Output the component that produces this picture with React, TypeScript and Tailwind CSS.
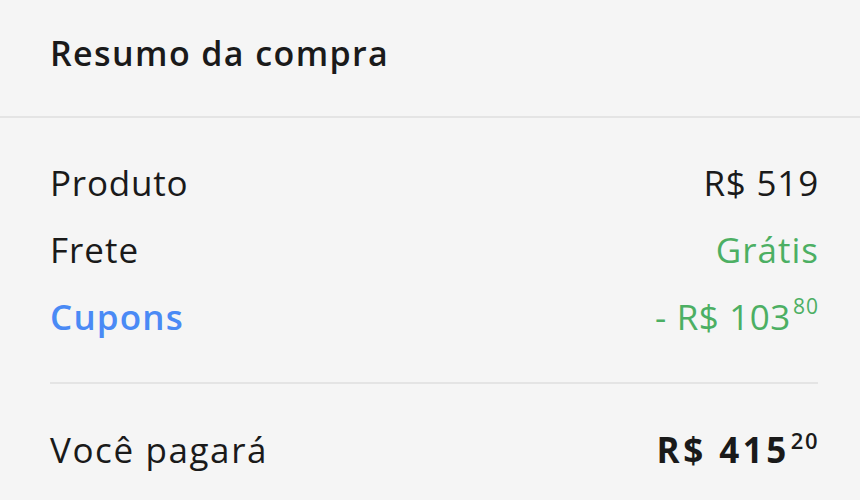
import React from "react";

export default function App() {
  return (
    <div
      className="w-full h-[500px] bg-[#f5f5f5] text-[#1a1a1a] overflow-hidden"
      style={{ fontFamily: '"Open Sans", "Liberation Sans", sans-serif' }}
    >
      <div className="h-[116px] flex items-center pl-[50px] pr-[42px] pb-[10px]">
        <h2 className="text-[34px] leading-none font-semibold tracking-[1.4px]">Resumo da compra</h2>
      </div>
      <div className="h-[2px] bg-[#e4e4e4]" />
      <div className="pl-[50px] pr-[42px] pt-[31px]">
        <div className="h-[67px] flex items-center justify-between text-[35px] leading-none tracking-[0.8px]">
          <span>Produto</span>
          <span className="mr-[-1px]">R$ 519</span>
        </div>
        <div className="h-[67px] flex items-center justify-between text-[35px] leading-none tracking-[1px]">
          <span>Frete</span>
          <span className="text-[#4caf63] mr-[-1px]">Grátis</span>
        </div>
        <div className="h-[67px] flex items-center justify-between text-[35px] leading-none tracking-[1px]">
          <span className="text-[#4a8af5] font-semibold tracking-[1.2px]">Cupons</span>
          <span className="text-[#4caf63] flex items-start mr-[-1px]">
            <span className="tracking-[0.6px]">- R$ 103</span>
            <span className="text-[21px] ml-[2px] mt-[-3px] tracking-[1px]">80</span>
          </span>
        </div>
        <div className="h-[2px] bg-[#e4e4e4] mt-[32px]" />
        <div className="h-[67px] mt-[32px] flex items-center justify-between text-[35px] leading-none">
          <span className="tracking-[1.6px]">Você pagará</span>
          <span className="flex items-start font-bold mr-[-1px]">
            <span className="tracking-[3.5px]">R$ 415</span>
            <span className="text-[22px] font-semibold ml-[1px] mt-[-3px] tracking-[1.5px]">20</span>
          </span>
        </div>
      </div>
    </div>
  );
}
